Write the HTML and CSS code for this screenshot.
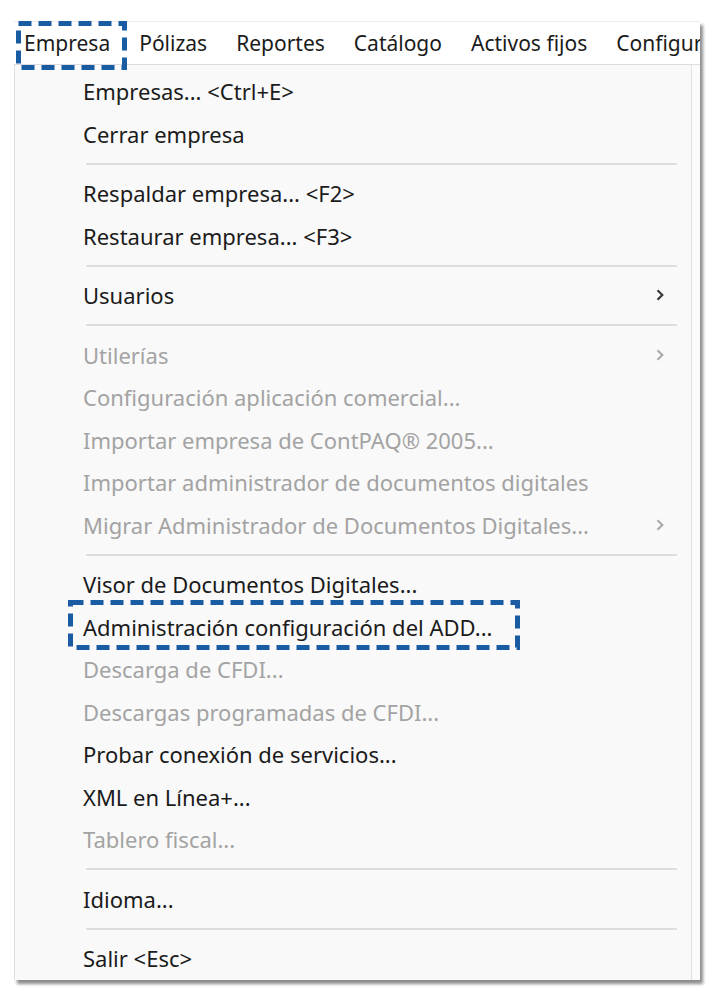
FILE: index.html
```html
<!DOCTYPE html>
<html lang="es">
<head>
<meta charset="utf-8">
<title>Menú Empresa</title>
<link rel="stylesheet" href="styles.css">
</head>
<body>
<div class="window">
  <nav class="menubar">
    <span class="menubar-item is-open">Empresa</span>
    <span class="menubar-item">Pólizas</span>
    <span class="menubar-item">Reportes</span>
    <span class="menubar-item">Catálogo</span>
    <span class="menubar-item">Activos fijos</span>
    <span class="menubar-item">Configuración</span>
  </nav>
  <div class="dropdown">
    <div class="item">Empresas... &lt;Ctrl+E&gt;</div>
    <div class="item">Cerrar empresa</div>
    <div class="sep"></div>
    <div class="item">Respaldar empresa... &lt;F2&gt;</div>
    <div class="item">Restaurar empresa... &lt;F3&gt;</div>
    <div class="sep"></div>
    <div class="item has-sub">Usuarios<svg class="chev" viewBox="0 0 8 12" width="8" height="12"><path d="M1.5 1.2 L6.3 6 L1.5 10.8" /></svg></div>
    <div class="sep"></div>
    <div class="item disabled has-sub">Utilerías<svg class="chev" viewBox="0 0 8 12" width="8" height="12"><path d="M1.5 1.2 L6.3 6 L1.5 10.8" /></svg></div>
    <div class="item disabled">Configuración aplicación comercial...</div>
    <div class="item disabled">Importar empresa de ContPAQ® 2005...</div>
    <div class="item disabled">Importar administrador de documentos digitales</div>
    <div class="item disabled has-sub">Migrar Administrador de Documentos Digitales...<svg class="chev" viewBox="0 0 8 12" width="8" height="12"><path d="M1.5 1.2 L6.3 6 L1.5 10.8" /></svg></div>
    <div class="sep"></div>
    <div class="item">Visor de Documentos Digitales...</div>
    <div class="item">Administración configuración del ADD...</div>
    <div class="item disabled">Descarga de CFDI...</div>
    <div class="item disabled">Descargas programadas de CFDI...</div>
    <div class="item">Probar conexión de servicios...</div>
    <div class="item">XML en Línea+...</div>
    <div class="item disabled">Tablero fiscal...</div>
    <div class="sep"></div>
    <div class="item">Idioma...</div>
    <div class="sep"></div>
    <div class="item">Salir &lt;Esc&gt;</div>
  </div>
  <svg class="hl hl-menu" width="111" height="49" viewBox="0 0 111 49"><rect x="2.5" y="2.5" width="106" height="44" /></svg>
  <svg class="hl hl-item" width="452" height="50" viewBox="0 0 452 50"><rect x="2.5" y="2.5" width="447" height="45" /></svg>
</div>
</body>
</html>
```

FILE: styles.css
```css
html, body {
  margin: 0;
  padding: 0;
  background: #ffffff;
}

body {
  font-family: "Noto Sans", "Open Sans", "DejaVu Sans", sans-serif;
  color: #1b1b1b;
  width: 720px;
  height: 1002px;
  overflow: hidden;
}

.window {
  position: relative;
  margin: 21px 0 0 14px;
  width: 686px;
  height: 959px;
  background: #fbfbfb;
  box-shadow: 3px 4px 3px rgba(0, 0, 0, 0.45);
  display: flex;
  flex-direction: column;
}

.menubar {
  height: 42px;
  display: flex;
  align-items: center;
  gap: 29px;
  padding-left: 10px;
  background: #ffffff;
  border-top: 1px solid #ececec;
  border-bottom: 1px solid #dddddd;
  white-space: nowrap;
  overflow: hidden;
  font-size: 21px;
  flex: none;
}

.menubar-item {
  line-height: 26px;
}

.dropdown {
  flex: 1;
  margin-right: 8px;
  padding-top: 5px;
  background: #f9f9f9;
  border-left: 1px solid #e0e0e0;
  border-right: 1px solid #e2e2e2;
  font-size: 22px;
}

.item {
  height: 42.5px;
  display: flex;
  align-items: center;
  justify-content: space-between;
  padding-left: 68px;
  padding-right: 27px;
  white-space: nowrap;
}

.item.disabled {
  color: #a3a3a3;
}

.chev {
  flex: none;
  fill: none;
  stroke: #3a3a3a;
  stroke-width: 2.2;
}

.disabled .chev {
  stroke: #aaaaaa;
}

.sep {
  height: 17px;
  display: flex;
  align-items: center;
  margin-left: 71px;
  margin-right: 14px;
}

.sep::before {
  content: "";
  flex: 1;
  height: 2px;
  background: #dedede;
}

.hl {
  position: absolute;
}

.hl rect {
  fill: none;
  stroke: #1a5ca3;
  stroke-width: 5;
  stroke-dasharray: 13 7;
}

.hl-menu {
  left: 2px;
  top: 0;
}

.hl-item {
  left: 54px;
  top: 579px;
}
```
